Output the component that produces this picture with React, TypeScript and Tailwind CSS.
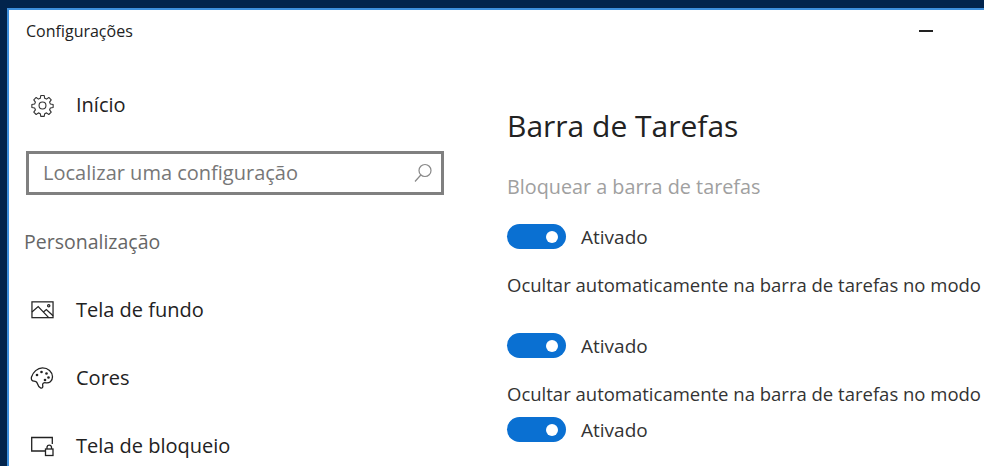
import React from "react";

function Toggle({ className }: { className: string }) {
  return (
    <div className={`flex items-center gap-[15px] ${className}`}>
      <div className="flex h-[25px] w-[59px] items-center justify-end rounded-full bg-[#0a70d2] pr-[8px]">
        <div className="h-[12px] w-[12px] rounded-full bg-white" />
      </div>
      <span className="text-[19px] leading-[24px] text-[#333]">Ativado</span>
    </div>
  );
}

function Gear() {
  return (
    <svg width="23" height="23" viewBox="0 0 24 24" fill="none" stroke="#333" strokeWidth="1.15" strokeLinejoin="round">
      <circle cx="12" cy="12" r="3.6" />
      <path d="M10.2 1.6h3.6l.5 2.9 1.9.8 2.4-1.7 2.5 2.5-1.7 2.4.8 1.9 2.9.5v3.2l-2.9.5-.8 1.9 1.7 2.4-2.5 2.5-2.4-1.7-1.9.8-.5 2.9h-3.6l-.5-2.9-1.9-.8-2.4 1.7-2.5-2.5 1.7-2.4-.8-1.9-2.9-.5v-3.2l2.9-.5.8-1.9-1.7-2.4 2.5-2.5 2.4 1.7 1.9-.8z" />
    </svg>
  );
}

function Picture() {
  return (
    <svg width="23" height="20" viewBox="0 0 24 20" fill="none" stroke="#222" strokeWidth="1.3">
      <rect x="1" y="1.500" width="22" height="16.500" />
      <path d="M1 12l6.500-5.500 11 11.500M13 12l3-2.500 7 6.500" />
      <circle cx="18.500" cy="5.500" r="1.200" />
    </svg>
  );
}

function Palette() {
  return (
    <svg width="24" height="24" viewBox="0 0 24 24" fill="none" stroke="#222" strokeWidth="1.3">
      <path d="M12.500 1.800c5.500 0 10 4 10 9 0 4.500-3.500 6.500-6.500 6-2.500-.4-3.800.6-3.300 2.500.5 2-.5 3.200-2.200 2.600-2-.7-2.700-3-3.200-4.500-.5-1.700-1.800-2.200-3.300-2.200-2 0-3-1.500-2.600-4C2.900 6.200 7.500 1.800 12.500 1.800z" />
      <circle cx="7" cy="9" r="1.300" fill="#222" stroke="none" />
      <circle cx="11.500" cy="6" r="1.300" fill="#222" stroke="none" />
      <circle cx="16.500" cy="7.500" r="1.300" fill="#222" stroke="none" />
      <circle cx="18.500" cy="11.500" r="1.300" fill="#222" stroke="none" />
      <circle cx="15" cy="14" r="1.300" fill="#222" stroke="none" />
    </svg>
  );
}

function LockScreen() {
  return (
    <svg width="24" height="22" viewBox="0 0 24 22" fill="none" stroke="#222" strokeWidth="1.300">
      <path d="M15 16H1.700V2.500H22.300V9" />
      <rect x="15.500" y="14" width="7.500" height="6.500" />
      <path d="M17 14v-2a2.300 2.300 0 0 1 4.500 0v2" />
    </svg>
  );
}

function NavItem({ icon, label, className }: { icon: React.ReactNode; label: string; className: string }) {
  return (
    <div className={`flex h-[30px] items-center ${className}`}>
      <div className="flex w-[24px] justify-center">{icon}</div>
      <span className="ml-[22px] text-[20px] leading-[30px] text-[#222]">{label}</span>
    </div>
  );
}

export default function App() {
  return (
    <div
      className="h-[466px] w-[984px] overflow-hidden bg-[#02244c] pl-[7px] pt-[8px]"
      style={{ fontFamily: '"Open Sans", "Noto Sans", sans-serif' }}
    >
      <div className="h-[470px] w-[990px] border-l-2 border-t-2 border-[#3d8fdc] bg-white">
        <div className="flex h-[42px] items-center justify-between pl-[17px] pr-[64px]">
          <span className="text-[16px] leading-[20px] text-[#222]">Configurações</span>
          <div className="h-[2px] w-[14px] bg-[#222]" />
        </div>
        <div className="flex">
          <div className="w-[498px] pl-[15px]">
            <NavItem className="ml-[6px] mt-[38px]" icon={<Gear />} label="Início" />
            <div className="ml-[2px] mt-[31px] flex h-[44px] w-[418px] items-center justify-between border-[3px] border-[#808080] pl-[14px] pr-[8px]">
              <span className="text-[20px] leading-[30px] text-[#777]">Localizar uma configuração</span>
              <svg width="20" height="20" viewBox="0 0 20 20" fill="none" stroke="#888" strokeWidth="1.200">
                <circle cx="12" cy="7.500" r="6" />
                <path d="M7.800 12L2 18.500" />
              </svg>
            </div>
            <div className="mt-[32px] text-[19.500px] leading-[30px] text-[#666]">Personalização</div>
            <NavItem className="ml-[6px] mt-[38px]" icon={<Picture />} label="Tela de fundo" />
            <NavItem className="ml-[6px] mt-[38px]" icon={<Palette />} label="Cores" />
            <NavItem className="ml-[6px] mt-[38px]" icon={<LockScreen />} label="Tela de bloqueio" />
          </div>
          <div className="min-w-0 flex-1">
            <div className="mt-[52px] text-[30px] leading-[44px] text-[#222]">Barra de Tarefas</div>
            <div className="mt-[26px] text-[19.800px] leading-[26px] text-[#a0a0a0]">Bloquear a barra de tarefas</div>
            <Toggle className="mt-[24px]" />
            <div className="mt-[24px] whitespace-nowrap text-[18.500px] leading-[24px] text-[#333]">Ocultar automaticamente na barra de tarefas no modo</div>
            <Toggle className="mt-[36px]" />
            <div className="mt-[24px] whitespace-nowrap text-[18.500px] leading-[24px] text-[#333]">Ocultar automaticamente na barra de tarefas no modo</div>
            <Toggle className="mt-[11px]" />
          </div>
        </div>
      </div>
    </div>
  );
}
